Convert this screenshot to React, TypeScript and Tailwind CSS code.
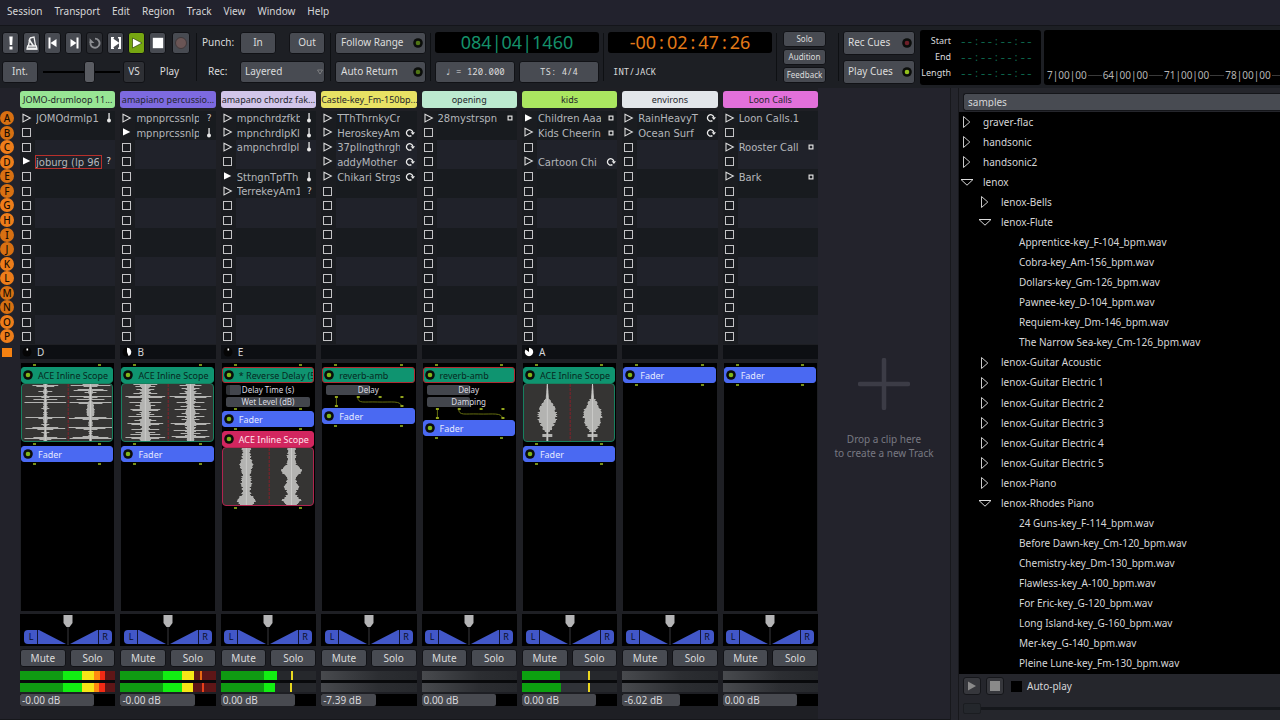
import React from "react";

type Slot = { name: string; follow?: "stop" | "loop" | "down" | "any"; playing?: boolean; selected?: boolean };
type Track = {
  name: string;
  pill: string;
  slots: Record<string, Slot>;
  cue?: string;
  phase?: number;
  gain: string;
  gainPct: number;
  meter: "hot" | "warm" | "mid" | "low" | "off";
  chain: React.ReactNode;
};

const ROWS = "ABCDEFGHIJKLMNOP".split("");
const MENUS = ["Session", "Transport", "Edit", "Region", "Track", "View", "Window", "Help"];
const MONO = "font-['Noto_Sans_Mono','DejaVu_Sans_Mono',monospace]";
const BTN = "flex items-center justify-center rounded-[3px] border border-[#111216] bg-[#484b52] text-[#dcdcdc]";

/* ---------- small drawings ---------- */

function Led({ color = "#7fb51a", size = 10 }: { color?: string; size?: number }) {
  return (
    <svg width={size} height={size} viewBox="0 0 10 10" className="shrink-0">
      <circle cx="5" cy="5" r="4.8" fill="#0b0d0b" />
      <circle cx="5" cy="5" r="2.3" fill={color} />
    </svg>
  );
}

function FollowIcon({ kind }: { kind?: Slot["follow"] }) {
  if (!kind) return null;
  if (kind === "any") return <span className="text-[9px] leading-none">?</span>;
  return (
    <svg width="10" height="10" viewBox="0 0 10 10">
      {kind === "down" && (
        <g fill="#e8e8e8">
          <rect x="4.4" y="0" width="1.3" height="7" />
          <circle cx="5" cy="7.4" r="2" />
        </g>
      )}
      {kind === "stop" && <rect x="3.1" y="3.1" width="3.8" height="3.8" fill="none" stroke="#e0e0e0" strokeWidth="1.2" />}
      {kind === "loop" && (
        <g>
          <path d="M6.4 7.600A3.2 3.2 0 1 1 7.800 4.400" fill="none" stroke="#ececec" strokeWidth="1.300" />
          <path d="M5.600 4.300H10L7.900 7Z" fill="#ececec" />
        </g>
      )}
    </svg>
  );
}

function Launch({ slot }: { slot?: Slot }) {
  return (
    <svg width="10" height="11" viewBox="0 0 10 11">
      {!slot && <rect x="0.5" y="1.5" width="8" height="8" fill="none" stroke="#c4c4c6" strokeWidth="1" />}
      {slot && !slot.playing && <path d="M1 1.3L8.3 5.1L1 8.9Z" fill="none" stroke="#dcdcdc" strokeWidth="1.1" />}
      {slot && slot.playing && <path d="M1 1.3L8.3 4.9L1 8.5Z" fill="#ffffff" />}
    </svg>
  );
}

function PhasePie({ phase }: { phase: number }) {
  const a = phase * Math.PI * 2 - Math.PI / 2;
  const large = phase > 0.5 ? 1 : 0;
  return (
    <svg width="10" height="10" viewBox="0 0 10 10">
      <circle cx="5" cy="5" r="4.5" fill="#050505" />
      {phase < 0.1 ? (
        <rect x="4.500" y="1.500" width="1.600" height="2" fill="#fff" />
      ) : (
        <path d={`M5 5L5 0.8A4.2 4.2 0 ${large} 1 ${5 + 4.2 * Math.cos(a)} ${5 + 4.2 * Math.sin(a)}Z`} fill="#fff" />
      )}
    </svg>
  );
}

type Shape = "beat" | "dense" | "band" | "bulge";

const SPIKES: Record<string, Record<number, number>> = {
  beatL: { 1: 13, 2: 9, 7: 7, 12: 20, 13: 4, 15: 12, 18: 21, 24: 4, 33: 20, 34: 7, 40: 4, 43: 13, 44: 20, 45: 8, 48: 4, 53: 12, 54: 21, 55: 6 },
  beatR: { 0: 8, 1: 20, 2: 7, 5: 13, 6: 17, 8: 6, 12: 21, 13: 7, 15: 14, 18: 21, 19: 12, 33: 16, 34: 22, 35: 8, 43: 22, 44: 15, 45: 7, 52: 8, 53: 18, 54: 21 },
  denseL: { 0: 12, 2: 10, 5: 9, 9: 12, 12: 20, 13: 17, 18: 16, 21: 10, 25: 15, 26: 13, 30: 9, 32: 17, 36: 11, 39: 18, 40: 14, 45: 14, 48: 10, 50: 15, 53: 20, 54: 14 },
  denseR: { 1: 11, 4: 9, 9: 11, 12: 21, 13: 16, 18: 14, 22: 10, 25: 16, 29: 9, 32: 14, 35: 9, 39: 20, 40: 16, 46: 17, 49: 10, 52: 19, 53: 15 },
};

function amplitude(shape: Shape, right: boolean, y: number) {
  const jitter = Math.abs(Math.sin(y * 12.9898 + (right ? 4.1 : 1.7)) * 43758.5453) % 1;
  if (shape === "beat") {
    const tail = y > 19 && y < 32 && right ? 3 : 1;
    return SPIKES[right ? "beatR" : "beatL"][y] ?? tail + jitter * 1.4;
  }
  if (shape === "dense") return SPIKES[right ? "denseR" : "denseL"][y] ?? 3 + jitter * 3;
  if (shape === "band") {
    const bumps = right ? [[22, 10], [38, 6], [52, 8]] : [[16, 6], [34, 4], [52, 8]];
    const bump = bumps.reduce((s, [c, h]) => s + (h - 3) * Math.exp(-((y - c) ** 2) / 18), 0);
    return 3 + bump + jitter * 2;
  }
  if (y < 15) return 0.5 + (y / 15) * 1.2;
  if (y < 48) {
    const t = (y - 15) / 33;
    return 2 + Math.sin(Math.PI * Math.min(1, t * 1.02)) * 5.5 + jitter * 3 * (1 - Math.abs(t - 0.5));
  }
  return y > 49 && y < 53 ? 5 : 1;
}

function Scope({ shape, border }: { shape: Shape; border: string }) {
  const bars = (cx: number, right: boolean) =>
    Array.from({ length: 57 }, (_, y) => {
      const a = amplitude(shape, right, y);
      return `M${(cx - a).toFixed(1)} ${y + 0.5}H${(cx + a).toFixed(1)}`;
    }).join("");
  return (
    <div className={`h-[59px] shrink-0 overflow-hidden rounded-[4px] border bg-[#353433] ${border}`}>
      <svg className="h-full w-full" viewBox="0 0 91 57" preserveAspectRatio="none">
        <path d={bars(23.5, false)} stroke="#b4b4b2" strokeWidth="1" />
        <path d={bars(69, true)} stroke="#b4b4b2" strokeWidth="1" />
        <path d="M23.5 0V57M69 0V57" stroke="#dadad8" strokeWidth="0.6" />
        <path d="M46.5 0V57" stroke="#85202a" strokeWidth="1" strokeDasharray="3 1" />
      </svg>
    </div>
  );
}

/* ---------- processor chain ---------- */

function Pins({ className = "h-1" }: { className?: string }) {
  return (
    <div className={`flex shrink-0 items-center justify-between px-3 ${className}`}>
      <i className="h-0.5 w-[3px] bg-[#76901a]" />
      <i className="h-0.5 w-[3px] bg-[#76901a]" />
    </div>
  );
}

function Wires() {
  return (
    <svg className="h-[13px] w-full shrink-0" viewBox="0 0 93 13" preserveAspectRatio="none">
      <path d="M14.5 2V12M36 2C36 9 42 6.500 56 7C70 7.500 80 5 80 12" fill="none" stroke="#656e10" strokeWidth="1" />
      <g fill="#93a51c">
        <rect x="13" y="1" width="3" height="2" />
        <rect x="35" y="1" width="3" height="2" />
        <rect x="57" y="1" width="3" height="2" />
        <rect x="79" y="1" width="3" height="2" />
        <rect x="13" y="10" width="3" height="2" />
        <rect x="79" y="10" width="3" height="2" />
      </g>
    </svg>
  );
}

function Proc({ label, tone }: { label: string; tone: "green" | "greenRed" | "blue" | "pink" }) {
  const tones = {
    green: "border-[#0f9470] bg-[#0f9470] text-[#06291f]",
    greenRed: "border-[#b02a32] bg-[#0f9470] text-[#06291f]",
    blue: "border-[#4a69f2] bg-[#4a69f2] text-[#e4e8ff]",
    pink: "border-[#d2265f] bg-[#d2265f] text-[#ffe3ec]",
  };
  return (
    <button className={`flex h-4 w-full shrink-0 items-center gap-[5px] overflow-hidden rounded-[3px] border pl-px text-[9px] leading-none ${tones[tone]}`}>
      <Led />
      <span className="whitespace-nowrap">{label}</span>
    </button>
  );
}

function Control({ label, pct, knob }: { label: string; pct: number; knob?: boolean }) {
  return (
    <div className="relative mx-1 mt-0.5 flex h-[10px] shrink-0 items-center justify-center text-[8px] leading-none text-[#dcdce2]">
      <div className={`absolute inset-y-0 left-0 rounded-[2px] bg-[#43464d] ${knob ? "border-l-4 border-[#303338]" : ""}`} style={{ width: `${pct}%` }} />
      <span className="relative whitespace-nowrap">{label}</span>
    </div>
  );
}

const Simple = () => (
  <>
    <Proc label="Fader" tone="blue" />
    <Pins />
  </>
);

const scopeChain = (shape: Shape) => (
  <>
    <Proc label="ACE Inline Scope" tone="green" />
    <Scope shape={shape} border="border-[#17805f]" />
    <Pins />
    <Simple />
  </>
);

const q = "any" as const;
const d = "down" as const;
const l = "loop" as const;
const s = "stop" as const;

const TRACKS: Track[] = [
  {
    name: "JOMO-drumloop 11...", pill: "bg-[#98e694]", cue: "D", phase: 0.04, gain: "-0.00 dB", gainPct: 78, meter: "hot",
    slots: { A: { name: "JOMOdrmlp1", follow: d }, D: { name: "joburg (lp 96", follow: q, playing: true, selected: true } },
    chain: scopeChain("beat"),
  },
  {
    name: "amapiano percussio...", pill: "bg-[#7d6ae0]", cue: "B", phase: 0.44, gain: "-0.00 dB", gainPct: 78, meter: "warm",
    slots: { A: { name: "mpnprcssnlp", follow: q }, B: { name: "mpnprcssnlp", follow: d, playing: true } },
    chain: scopeChain("dense"),
  },
  {
    name: "amapano chordz fak...", pill: "bg-[#d2c6ea]", cue: "E", phase: 0.05, gain: "0.00 dB", gainPct: 78, meter: "mid",
    slots: {
      A: { name: "mpnchrdzfkb", follow: d }, B: { name: "mpnchrdlpKl", follow: d }, C: { name: "ampnchrdlpl", follow: d },
      E: { name: "SttngnTpfTh", follow: d, playing: true }, F: { name: "TerrekeyAm1", follow: q },
    },
    chain: (
      <>
        <Proc label="* Reverse Delay (5" tone="greenRed" />
        <Control label="Delay Time (s)" pct={18} knob />
        <Control label="Wet Level (dB)" pct={100} />
        <Pins />
        <Simple />
        <Proc label="ACE Inline Scope" tone="pink" />
        <Scope shape="band" border="border-[#b0244f]" />
        <Pins />
      </>
    ),
  },
  {
    name: "Castle-key_Fm-150bp...", pill: "bg-[#e8e264]", gain: "-7.39 dB", gainPct: 58, meter: "off",
    slots: {
      A: { name: "TThThrnkyCr" }, B: { name: "HeroskeyAm", follow: l }, C: { name: "37pllngthrgh", follow: l },
      D: { name: "addyMother", follow: l }, E: { name: "Chikari Strgs", follow: l },
    },
    chain: (
      <>
        <Proc label="reverb-amb" tone="greenRed" />
        <Control label="Delay" pct={52} />
        <Wires />
        <Simple />
      </>
    ),
  },
  {
    name: "opening", pill: "bg-[#bcead0]", gain: "0.00 dB", gainPct: 78, meter: "off",
    slots: { A: { name: "28mystrspn", follow: s } },
    chain: (
      <>
        <Proc label="reverb-amb" tone="greenRed" />
        <Control label="Delay" pct={52} />
        <Control label="Damping" pct={52} />
        <Wires />
        <Simple />
      </>
    ),
  },
  {
    name: "kids", pill: "bg-[#aae660]", cue: "A", phase: 0.85, gain: "0.00 dB", gainPct: 78, meter: "low",
    slots: {
      A: { name: "Children Aaa", follow: s, playing: true }, B: { name: "Kids Cheerin", follow: s }, D: { name: "Cartoon Chi", follow: l },
    },
    chain: scopeChain("bulge"),
  },
  {
    name: "environs", pill: "bg-[#e2e6ea]", gain: "-6.02 dB", gainPct: 61, meter: "off",
    slots: { A: { name: "RainHeavyT", follow: l }, B: { name: "Ocean Surf", follow: l } },
    chain: <Simple />,
  },
  {
    name: "Loon Calls", pill: "bg-[#e270da]", gain: "0.00 dB", gainPct: 78, meter: "off",
    slots: { A: { name: "Loon Calls.1" }, C: { name: "Rooster Call", follow: s }, E: { name: "Bark", follow: s } },
    chain: <Simple />,
  },
];

/* ---------- mixer strip ---------- */

function Panner() {
  return (
    <div className="flex h-8 justify-center bg-black">
      <svg width="92" height="32" viewBox="0 0 92 32">
        <path d="M46 13V31" stroke="#3a3a3e" strokeWidth="1" />
        <path d="M6 16H17L44 30H6a4 4 0 0 1-4-4V20a4 4 0 0 1 4-4Z" fill="#4257c8" />
        <path d="M86 16H75L48 30H86a4 4 0 0 0 4-4V20a4 4 0 0 0-4-4Z" fill="#4257c8" />
        <path d="M15.500 16V30M76.500 16V30" stroke="#101430" strokeWidth="1" />
        <path d="M41.500 1H50.500V9L47.500 13H44.500L41.500 9Z" fill="#b4b4b6" />
        <text x="9" y="26" textAnchor="middle" fontSize="9" fill="#0b0f28">L</text>
        <text x="83" y="26" textAnchor="middle" fontSize="9" fill="#0b0f28">R</text>
      </svg>
    </div>
  );
}

const METERS: Record<Track["meter"], [string, string]> = {
  hot: [
    "bg-[linear-gradient(90deg,#0f9a12_45%,#12ee12_45%_65%,#f6e616_65%_78%,#ff8a10_78%_84%,#f22a14_84%_89%,#5e1617_89%)]",
    "bg-[linear-gradient(90deg,#0f9a12_45%,#12ee12_45%_65%,#f6e616_65%_78%,#ff8a10_78%_83%,#f22a14_83%_89%,#5e1617_89%)]",
  ],
  warm: [
    "bg-[linear-gradient(90deg,#0f9a12_45%,#12ee12_45%_65%,#f6e616_65%_77%,#5e1617_77%_83%,#e86a14_83%_85%,#5e1617_85%)]",
    "bg-[linear-gradient(90deg,#0f9a12_45%,#12ee12_45%_65%,#f6e616_65%_76%,#5e1617_76%_85%,#e8401a_85%_87%,#5e1617_87%)]",
  ],
  mid: [
    "bg-[linear-gradient(90deg,#0f9a12_45%,#12ee12_45%_59%,#26282c_59%_74%,#e8d820_74%_76%,#26282c_76%)]",
    "bg-[linear-gradient(90deg,#0f9a12_45%,#12ee12_45%_57%,#26282c_57%_73%,#e8d820_73%_75%,#26282c_75%)]",
  ],
  low: [
    "bg-[linear-gradient(90deg,#0ca010_40%,#303338_40%_69%,#ecd820_69%_72%,#26282c_72%)]",
    "bg-[linear-gradient(90deg,#0ca010_41%,#303338_41%_69%,#ecd820_69%_72%,#26282c_72%)]",
  ],
  off: [
    "bg-[linear-gradient(90deg,#484a4e,#2c2e32_60%,#26282c)]",
    "bg-[linear-gradient(90deg,#484a4e,#2c2e32_60%,#26282c)]",
  ],
};

function SlotGrid({ track }: { track: Track }) {
  return (
    <div className="grid h-[233px] grid-rows-16 bg-[#1a1c20] font-['DejaVu_Sans',sans-serif]">
      {ROWS.map((r, i) => {
        const slot = track.slots[r];
        return (
          <div key={r} className="grid grid-cols-[15px_67px_1fr] items-center overflow-hidden">
            <button aria-label={`Launch ${r}`} className="pl-0.5">
              <Launch slot={slot} />
            </button>
            <div className={`col-span-2 grid h-full grid-cols-[67px_1fr] items-center ${i % 4 < 2 ? "bg-[#181b1f]" : "bg-[#20222a]"}`}>
              <div
                className={`flex h-[14px] w-[67px] items-center overflow-hidden border ${slot?.selected ? "border-[#b8302c]" : "border-transparent"}`}
              >
                <span className="block w-[63px] overflow-hidden pt-0.5 whitespace-nowrap text-[10px] leading-[14px] text-[#b4b6ba]">{slot?.name}</span>
              </div>
              <span className="flex justify-center text-[#d4d4d4]">
                <FollowIcon kind={slot?.follow} />
              </span>
            </div>
          </div>
        );
      })}
    </div>
  );
}

function Strip({ track }: { track: Track }) {
  return (
    <section className="flex min-w-0 flex-col">
      <button className={`mb-[3px] h-[17px] shrink-0 overflow-hidden rounded-[3px] text-center text-[9px] leading-[17px] whitespace-nowrap text-[#24262c] ${track.pill}`}>
        {track.name}
      </button>
      <SlotGrid track={track} />
      <div className="mt-px flex h-[14px] shrink-0 items-center gap-[5px] bg-[#0d0f13] pl-0.5 text-[10px] leading-none text-[#d4d6da]">
        {track.cue && (
          <>
            <PhasePie phase={track.phase ?? 0} />
            <span>{track.cue}</span>
          </>
        )}
      </div>
      <div className="mx-px mt-1 flex min-h-0 flex-1 flex-col overflow-hidden bg-black pr-px">
        <Pins className="h-1" />
        {track.chain}
      </div>
      <div className="mt-[3px] shrink-0">
        <Panner />
      </div>
      <div className="mt-[3px] flex shrink-0 gap-1 text-[10px]">
        <button className={`${BTN} h-[18px] flex-1 leading-none`}>Mute</button>
        <button className={`${BTN} h-[18px] flex-1 leading-none`}>Solo</button>
      </div>
      <div className="mt-1 flex shrink-0 flex-col gap-[3px] bg-[#08090b]">
        <div className={`h-[9px] ${METERS[track.meter][0]}`} />
        <div className={`h-[9px] ${METERS[track.meter][1]}`} />
      </div>
      <div className="relative mt-0.5 h-3 shrink-0 bg-black">
        <div className="h-full rounded-[2px] bg-[#484a50]" style={{ width: `${track.gainPct}%` }} />
        <span className="absolute inset-y-0 left-0.5 text-[10px] leading-3 text-[#d8d8dc]">{track.gain}</span>
        <input type="range" aria-label={`${track.name} gain`} defaultValue={track.gainPct} className="absolute inset-0 w-full opacity-0" />
      </div>
    </section>
  );
}

/* ---------- toolbar ---------- */

const ICONS: { label: string; cls: string; art: React.ReactNode }[] = [
  {
    label: "Panic", cls: "bg-[#484b52]",
    art: <path d="M6.300 1.500H9.700L9.200 10H6.800ZM6.500 11.500H9.500V14.500H6.500Z" fill="#fff" />,
  },
  {
    label: "Metronome", cls: "bg-[#484b52]",
    art: (
      <g fill="none" stroke="#f2f2f2" strokeWidth="1.300">
        <path d="M6 3L10 2L11.500 10.500M6 3L4.500 10.500M3 14.200H13L12.300 11H3.700Z" />
        <path d="M5 4.500L9.500 11" strokeWidth="1.600" />
        <path d="M3 13.500H13" strokeWidth="2" />
      </g>
    ),
  },
  {
    label: "Go to start", cls: "bg-[#484b52]",
    art: (
      <g fill="#fff">
        <path d="M3.500 2.500H5.500V13.500H3.500Z" />
        <path d="M11.500 4V12L5.500 8Z" />
      </g>
    ),
  },
  {
    label: "Go to end", cls: "bg-[#484b52]",
    art: (
      <g fill="#fff">
        <path d="M10.500 2.500H12.500V13.500H10.500Z" />
        <path d="M4.500 4V12L10.500 8Z" />
      </g>
    ),
  },
  {
    label: "Loop", cls: "bg-[#2c2e33]",
    art: (
      <g>
        <path d="M4.200 5.600A4.600 4.600 0 1 0 8 3.600" fill="none" stroke="#8d8f93" strokeWidth="1.900" />
        <path d="M2.600 3.200V8H7.400Z" fill="#8d8f93" />
      </g>
    ),
  },
  {
    label: "Play range", cls: "bg-[#484b52]",
    art: (
      <g fill="#fff">
        <path d="M3 2H6V3.500H5V12.500H6V14H3ZM13 2H10V3.500H11V12.500H10V14H13Z" />
        <path d="M5 3.500L11.500 8L5 12.500Z" />
      </g>
    ),
  },
  {
    label: "Play", cls: "bg-[#76a611]",
    art: <path d="M3.500 3L13 8L3.500 13Z" fill="#fff" stroke="#31420b" strokeWidth="0.700" />,
  },
  { label: "Stop", cls: "bg-[#484b52]", art: <path d="M2.800 2.800H13.200V13.200H2.800Z" fill="#fff" /> },
];

function Sep() {
  return <div className="h-12 w-px shrink-0 self-center bg-[#0e1013]" />;
}

function Timecode({ parts }: { parts: string[] }) {
  return (
    <span>
      -
      {parts.map((p, i) => (
        <React.Fragment key={i}>
          {i > 0 && <span className="px-[3px]">:</span>}
          {p}
        </React.Fragment>
      ))}
    </span>
  );
}

function Toolbar() {
  const time = "--:--:--:--";
  return (
    <div className="flex h-[63px] shrink-0 items-center border-t border-[#14151a] bg-[#1d1f24] text-[10px] text-[#dadbdd]">
      <div className="flex w-[190px] shrink-0 flex-col gap-[7px] pl-0.5">
        <div className="flex gap-1">
          {ICONS.map((ic) => (
            <button key={ic.label} aria-label={ic.label} className={`flex h-[22px] w-[17px] items-center justify-center rounded-[3px] border border-[#111216] ${ic.cls}`}>
              <svg width="16" height="16" viewBox="0 0 16 16" className="shrink-0">{ic.art}</svg>
            </button>
          ))}
          <button aria-label="Record" className="ml-0.5 flex h-[22px] w-[18px] items-center justify-center rounded-[3px] border border-[#111216] bg-[#484b52]">
            <svg width="14" height="14" viewBox="0 0 14 14" className="shrink-0"><circle cx="7" cy="7" r="5.500" fill="#6a5555" stroke="#40383a" /></svg>
          </button>
        </div>
        <div className="flex items-center">
          <button className={`${BTN} h-[22px] w-9`}>Int.</button>
          <input
            type="range"
            aria-label="Shuttle speed"
            defaultValue={62}
            className="mr-px ml-[5px] h-[22px] w-[77px] appearance-none bg-[linear-gradient(#000,#000)] bg-[length:100%_2px] bg-center bg-no-repeat [&::-webkit-slider-thumb]:h-[22px] [&::-webkit-slider-thumb]:w-[11px] [&::-webkit-slider-thumb]:appearance-none [&::-webkit-slider-thumb]:rounded-[3px] [&::-webkit-slider-thumb]:border [&::-webkit-slider-thumb]:border-[#111216] [&::-webkit-slider-thumb]:bg-[#5a5c62]"
          />
          <button className="ml-0.5 flex h-[22px] w-[22px] items-center justify-center rounded-[3px] border border-[#111216] bg-[#2e3035]">VS</button>
          <span className="flex-1 pl-1 text-center">Play</span>
        </div>
      </div>
      <div className="w-[6px] shrink-0" />
      <Sep />
      <div className="ml-[5px] grid shrink-0 grid-cols-[32px_85px] items-center gap-x-[6px] gap-y-[7px]">
        <span>Punch:</span>
        <div className="flex justify-between">
          <button className={`${BTN} h-[22px] w-9`}>In</button>
          <button className={`${BTN} h-[22px] w-9`}>Out</button>
        </div>
        <label htmlFor="rec-mode" className="pl-[6px]">Rec:</label>
        <div className="relative flex">
          <select id="rec-mode" className="h-[22px] w-full appearance-none rounded-[3px] border border-[#111216] bg-[#484b52] pl-1">
            <option>Layered</option>
          </select>
          <svg className="pointer-events-none absolute top-2 right-[2px]" width="6" height="6" viewBox="0 0 6 6"><path d="M0.500 1H5.500L3 5Z" fill="#44474e" stroke="#a0a0a0" strokeWidth="0.600" /></svg>
        </div>
      </div>
      <div className="w-[5px] shrink-0" />
      <Sep />
      <div className="mx-1 flex w-[91px] shrink-0 flex-col gap-[7px]">
        {["Follow Range", "Auto Return"].map((t) => (
          <button key={t} className={`${BTN} h-[22px] !justify-between pr-[2px] pl-[5px]`}>
            {t}
            <Led color="#4f7414" />
          </button>
        ))}
      </div>
      <Sep />
      <div className="mx-1 flex w-[164px] shrink-0 flex-col gap-2">
        <div className="flex h-[21px] items-center justify-center rounded-[3px] bg-black text-[18px] leading-none text-[#14906a]">084|04|1460</div>
        <div className="flex gap-1">
          <button className={`${BTN} ${MONO} h-[22px] flex-1 text-[9px] whitespace-pre`}>♩ = 120.000</button>
          <button className={`${BTN} ${MONO} h-[22px] flex-1 text-[9px]`}>TS: 4/4</button>
        </div>
      </div>
      <Sep />
      <div className="mx-1 flex w-[164px] shrink-0 flex-col gap-2">
        <div className="flex h-[21px] items-center justify-center rounded-[3px] bg-black text-[18px] leading-none text-[#e37a18]">
          <Timecode parts={["00", "02", "47", "26"]} />
        </div>
        <div className={`flex h-[22px] items-center pl-[5px] text-[9px] ${MONO}`}>INT/JACK</div>
      </div>
      <Sep />
      <div className="ml-[6px] flex w-[43px] shrink-0 flex-col gap-0.5 text-[8px]">
        {["Solo", "Audition", "Feedback"].map((t) => (
          <button key={t} className={`${BTN} h-4 leading-none`}>{t}</button>
        ))}
      </div>
      <div className="w-3 shrink-0" />
      <Sep />
      <div className="ml-1 flex w-[72px] shrink-0 flex-col gap-[5px]">
        <button className={`${BTN} h-6 !justify-between pr-[2px] pl-1`}>Rec Cues<Led color="#6d1f28" /></button>
        <button className={`${BTN} h-6 !justify-between pr-[2px] pl-1`}>Play Cues<Led color="#93c01c" /></button>
      </div>
      <dl className="ml-[5px] grid h-[55px] w-[121px] shrink-0 grid-cols-[31px_1fr] content-center gap-x-2 rounded-[3px] bg-black text-[9px] leading-4">
        {["Start", "End", "Length"].map((t) => (
          <React.Fragment key={t}>
            <dt className="text-right">{t}</dt>
            <dd className={`pl-px text-[11px] text-[#0e6b50] ${MONO}`}>{time}</dd>
          </React.Fragment>
        ))}
      </dl>
      <div className="ml-[3px] flex h-[55px] min-w-0 flex-1 items-end overflow-hidden rounded-l-[3px] bg-black pb-0.5 pl-[3px] text-[#b4b4b4]">
        {["7|00|00", "64|00|00", "71|00|00", "78|00|00", ""].map((t, i) => (
          <React.Fragment key={i}>
            {i > 0 && <i className="mx-px mb-[7px] h-px w-[14px] shrink-0 self-end bg-[#3a3a3a]" />}
            <span className="leading-4 whitespace-nowrap">{t}</span>
          </React.Fragment>
        ))}
      </div>
    </div>
  );
}

/* ---------- clip browser ---------- */

const TREE: [number, string, boolean?][] = [
  [0, "graver-flac", false], [0, "handsonic", false], [0, "handsonic2", false], [0, "lenox", true],
  [1, "lenox-Bells", false], [1, "lenox-Flute", true],
  [2, "Apprentice-key_F-104_bpm.wav"], [2, "Cobra-key_Am-156_bpm.wav"], [2, "Dollars-key_Gm-126_bpm.wav"],
  [2, "Pawnee-key_D-104_bpm.wav"], [2, "Requiem-key_Dm-146_bpm.wav"], [2, "The Narrow Sea-key_Cm-126_bpm.wav"],
  [1, "lenox-Guitar Acoustic", false], [1, "lenox-Guitar Electric 1", false], [1, "lenox-Guitar Electric 2", false],
  [1, "lenox-Guitar Electric 3", false], [1, "lenox-Guitar Electric 4", false], [1, "lenox-Guitar Electric 5", false],
  [1, "lenox-Piano", false], [1, "lenox-Rhodes Piano", true],
  [2, "24 Guns-key_F-114_bpm.wav"], [2, "Before Dawn-key_Cm-120_bpm.wav"], [2, "Chemistry-key_Dm-130_bpm.wav"],
  [2, "Flawless-key_A-100_bpm.wav"], [2, "For Eric-key_G-120_bpm.wav"], [2, "Long Island-key_G-160_bpm.wav"],
  [2, "Mer-key_G-140_bpm.wav"], [2, "Pleine Lune-key_Fm-130_bpm.wav"],
];
const INDENT = ["pl-0", "pl-[18px]", "pl-9"];

function Browser() {
  return (
    <aside className="flex w-[321px] shrink-0 flex-col bg-[#25262c] text-[10px] text-[#d6d6d8]">
      <select aria-label="Folder" className="mt-[5px] ml-1 h-[18px] appearance-none rounded-l-[3px] border border-r-0 border-[#15161a] bg-[#484b52] pl-1 leading-none">
        <option>samples</option>
      </select>
      <ul className="mt-px grid min-h-0 flex-1 auto-rows-fr overflow-hidden bg-black">
        {TREE.map(([lv, name, open]) => (
          <li key={name} className={`flex min-h-0 items-center ${INDENT[lv]}`}>
            <span className="flex w-6 shrink-0 justify-start pl-px">
              {open !== undefined && (
                <svg width="14" height="14" viewBox="0 0 14 14">
                  {open ? <path d="M1 4.500H13L7 10.200Z" fill="none" stroke="#dcdcdc" /> : <path d="M3.500 1.500L9.800 7L3.500 12.500Z" fill="none" stroke="#c8c8c8" />}
                </svg>
              )}
            </span>
            <button className="whitespace-nowrap">{name}</button>
          </li>
        ))}
      </ul>
      <div className="flex h-[46px] shrink-0 flex-col pt-[3px] pl-1">
        <div className="flex items-center">
          <button aria-label="Play sample" className="flex h-[18px] w-[18px] items-center justify-center rounded-[3px] border border-[#15161a] bg-[#36373c]">
            <svg width="10" height="10" viewBox="0 0 10 10"><path d="M1 0.500L9 5L1 9.500Z" fill="#8a8a8a" /></svg>
          </button>
          <button aria-label="Stop sample" className="ml-[5px] flex h-[18px] w-[18px] items-center justify-center rounded-[3px] border border-[#15161a] bg-[#36373c]">
            <svg width="10" height="10" viewBox="0 0 10 10"><rect width="10" height="10" fill="#8a8a8a" /></svg>
          </button>
          <label className="ml-[7px] flex items-center gap-[5px]">
            <input type="checkbox" className="h-[11px] w-[11px] appearance-none bg-black" />
            Auto-play
          </label>
        </div>
        <input
          type="range"
          aria-label="Sample position"
          defaultValue={0}
          className="mt-2 mr-0 h-[11px] appearance-none bg-[linear-gradient(#15171b,#15171b)] bg-[length:100%_3px] bg-center bg-no-repeat [&::-webkit-slider-thumb]:h-[11px] [&::-webkit-slider-thumb]:w-[18px] [&::-webkit-slider-thumb]:appearance-none [&::-webkit-slider-thumb]:rounded-[2px] [&::-webkit-slider-thumb]:border [&::-webkit-slider-thumb]:border-[#1b1d21] [&::-webkit-slider-thumb]:bg-[#24272c]"
        />
      </div>
    </aside>
  );
}

export default function App() {
  return (
    <div className="flex h-screen min-h-[640px] flex-col overflow-hidden bg-[#202127] font-['Noto_Sans',sans-serif]">
      <nav className="flex h-[25px] shrink-0 items-center gap-3 bg-[#22222d] pb-[3px] pl-[7px] text-[10px] text-[#d6d6d8]">
        {MENUS.map((m) => (
          <button key={m}>{m}</button>
        ))}
      </nav>
      <Toolbar />
      <div className="flex min-h-0 flex-1">
        <main className="flex min-w-0 flex-1 border-b border-[#16171b]">
          <div className="flex w-5 shrink-0 flex-col bg-[#22222a] pt-[23px]">
            <div className="grid h-[233px] shrink-0 grid-rows-16">
              {ROWS.map((r, i) => (
                <button
                  key={r}
                  className={`flex h-[14px] w-[14px] items-center justify-center rounded-full text-[10px] leading-none font-medium text-[#1c0e02] ${i % 4 < 2 ? "bg-[#d87012]" : "bg-[#ee7d1a]"}`}
                >
                  {r}
                </button>
              ))}
            </div>
            <button aria-label="Stop all" className="mt-1 ml-0.5 h-[9px] w-[10px] bg-[#f58212]" />
          </div>
          <div className="grid min-w-0 flex-1 grid-cols-8 gap-[5px] bg-[#1e1f24] pt-[3px] pb-[13px]">
            {TRACKS.map((t) => (
              <Strip key={t.name} track={t} />
            ))}
          </div>
          <div className="flex w-[132px] shrink-0 flex-col items-center bg-[#23232c] pt-[270px] text-center text-[10px] leading-[14px] text-[#787982]">
            <svg width="52" height="52" viewBox="0 0 52 52" className="mb-[22px]">
              <path d="M26 2V50M2 26H50" stroke="#3c3c46" strokeWidth="4.500" strokeLinecap="round" />
            </svg>
            <p>
              Drop a clip here
              <br />
              to create a new Track
            </p>
          </div>
        </main>
        <div className="w-[9px] shrink-0 border-x border-[#17181c] bg-[#24252c]" />
        <Browser />
      </div>
    </div>
  );
}
